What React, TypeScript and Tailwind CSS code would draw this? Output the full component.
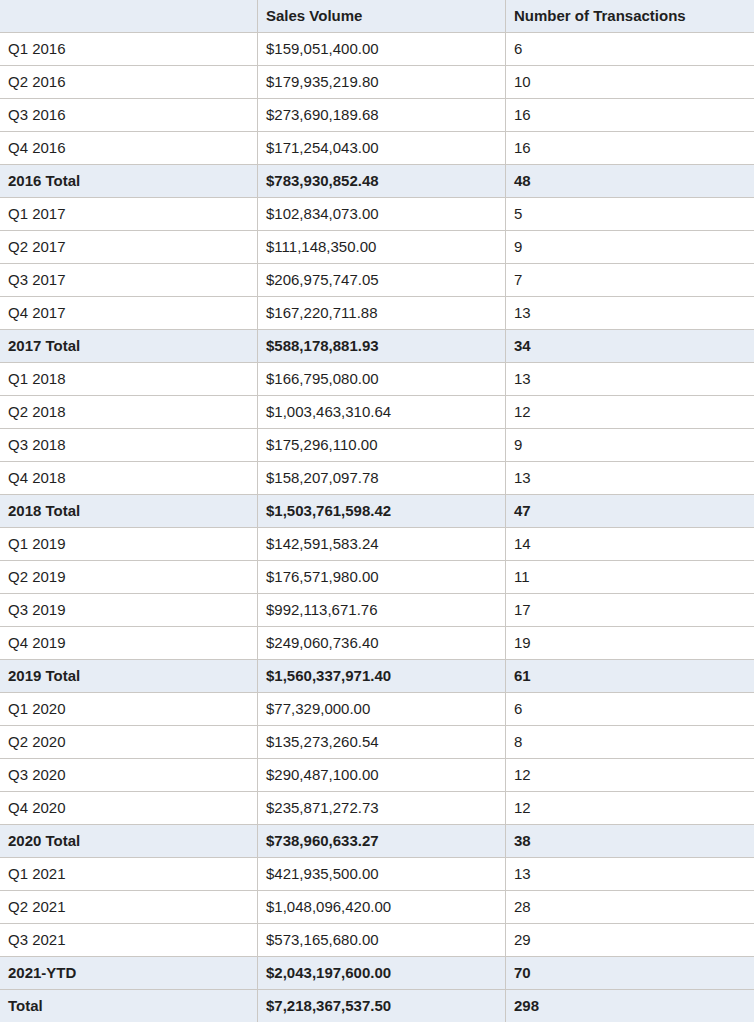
const rows: { label: string; sales: string; count: string; total?: boolean }[] = [
  { label: 'Q1 2016', sales: '$159,051,400.00', count: '6' },
  { label: 'Q2 2016', sales: '$179,935,219.80', count: '10' },
  { label: 'Q3 2016', sales: '$273,690,189.68', count: '16' },
  { label: 'Q4 2016', sales: '$171,254,043.00', count: '16' },
  { label: '2016 Total', sales: '$783,930,852.48', count: '48', total: true },
  { label: 'Q1 2017', sales: '$102,834,073.00', count: '5' },
  { label: 'Q2 2017', sales: '$111,148,350.00', count: '9' },
  { label: 'Q3 2017', sales: '$206,975,747.05', count: '7' },
  { label: 'Q4 2017', sales: '$167,220,711.88', count: '13' },
  { label: '2017 Total', sales: '$588,178,881.93', count: '34', total: true },
  { label: 'Q1 2018', sales: '$166,795,080.00', count: '13' },
  { label: 'Q2 2018', sales: '$1,003,463,310.64', count: '12' },
  { label: 'Q3 2018', sales: '$175,296,110.00', count: '9' },
  { label: 'Q4 2018', sales: '$158,207,097.78', count: '13' },
  { label: '2018 Total', sales: '$1,503,761,598.42', count: '47', total: true },
  { label: 'Q1 2019', sales: '$142,591,583.24', count: '14' },
  { label: 'Q2 2019', sales: '$176,571,980.00', count: '11' },
  { label: 'Q3 2019', sales: '$992,113,671.76', count: '17' },
  { label: 'Q4 2019', sales: '$249,060,736.40', count: '19' },
  { label: '2019 Total', sales: '$1,560,337,971.40', count: '61', total: true },
  { label: 'Q1 2020', sales: '$77,329,000.00', count: '6' },
  { label: 'Q2 2020', sales: '$135,273,260.54', count: '8' },
  { label: 'Q3 2020', sales: '$290,487,100.00', count: '12' },
  { label: 'Q4 2020', sales: '$235,871,272.73', count: '12' },
  { label: '2020 Total', sales: '$738,960,633.27', count: '38', total: true },
  { label: 'Q1 2021', sales: '$421,935,500.00', count: '13' },
  { label: 'Q2 2021', sales: '$1,048,096,420.00', count: '28' },
  { label: 'Q3 2021', sales: '$573,165,680.00', count: '29' },
  { label: '2021-YTD', sales: '$2,043,197,600.00', count: '70', total: true },
  { label: 'Total', sales: '$7,218,367,537.50', count: '298', total: true },
];

function Row(props: { a: string; b: string; c: string; shaded?: boolean; bold?: boolean; height: string }) {
  const { a, b, c, shaded, bold, height } = props;
  const bg = shaded ? 'bg-[#e7edf5]' : 'bg-white';
  const weight = bold ? 'font-bold' : 'font-normal';
  return (
    <div className={`grid grid-cols-[257px_248px_249px] border-b border-[#cbc8c4] ${bg} ${weight} ${height}`}>
      <div className="flex items-center pl-2">{a}</div>
      <div className="flex items-center pl-2 border-l border-[#cbc8c4]">{b}</div>
      <div className="flex items-center pl-2 border-l border-[#cbc8c4]">{c}</div>
    </div>
  );
}

export default function App() {
  return (
    <div className="w-[754px] bg-white text-[#1f1f1f] text-[15px] font-['Liberation_Sans',Arial,sans-serif]">
      <Row a="" b="Sales Volume" c="Number of Transactions" shaded bold height="h-[33px]" />
      {rows.map((r) => (
        <Row key={r.label} a={r.label} b={r.sales} c={r.count} shaded={r.total} bold={r.total} height="h-[33px]" />
      ))}
    </div>
  );
}
